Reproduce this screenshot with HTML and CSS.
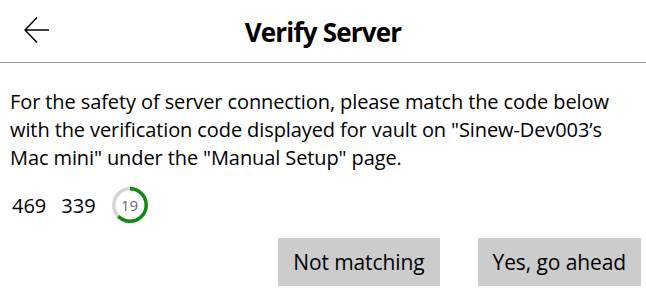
FILE: index.html
```html
<!DOCTYPE html>
<html>
<head>
<meta charset="utf-8">
<link rel="stylesheet" href="styles.css">
</head>
<body>
<div class="page">
  <header class="header">
    <button class="back" aria-label="Back">
      <svg width="26" height="28" viewBox="0 0 26 28">
        <path d="M1 14 H25 M13 1.5 L1 14 L13 26.5" fill="none" stroke="#000" stroke-width="1.6"/>
      </svg>
    </button>
    <h1 class="title">Verify Server</h1>
  </header>
  <main class="content">
    <p class="message">For the safety of server connection, please match the code below with the verification code displayed for vault on "Sinew-Dev003’s Mac mini" under the "Manual Setup" page.</p>
    <div class="code-row">
      <span class="code">469</span>
      <span class="code">339</span>
      <div class="timer">
        <svg width="36" height="36" viewBox="0 0 36 36">
          <circle cx="18" cy="18" r="16.2" fill="none" stroke="#d4d4d4" stroke-width="3.4"/>
          <circle cx="18" cy="18" r="16.2" fill="none" stroke="#108a10" stroke-width="3.4"
            stroke-dasharray="63.5 102" transform="rotate(-90 18 18)"/>
        </svg>
        <span class="timer-num">19</span>
      </div>
    </div>
    <div class="actions">
      <button class="btn">Not matching</button>
      <button class="btn">Yes, go ahead</button>
    </div>
  </main>
</div>
</body>
</html>
```

FILE: styles.css
```css
html, body {
  margin: 0;
  padding: 0;
  background: #fff;
}
body {
  font-family: "Open Sans", "Noto Sans", sans-serif;
  color: #000;
  width: 646px;
  height: 295px;
  overflow: hidden;
}
.header {
  position: relative;
  height: 62px;
  border-bottom: 1px solid #a0a0a0;
  display: flex;
  align-items: center;
  justify-content: center;
}
.back {
  position: absolute;
  left: 24px;
  top: 16px;
  border: 0;
  background: none;
  padding: 0;
  width: 26px;
  height: 28px;
  display: block;
}
.back svg { display: block; }
.title {
  margin: 0;
  padding-top: 2px;
  font-size: 26px;
  font-weight: 700;
  letter-spacing: -0.8px;
}
.content {
  padding: 25px 5px 0 10px;
}
.message {
  margin: 0;
  width: 620px;
  font-size: 20px;
  line-height: 28px;
  letter-spacing: -0.1px;
}
.code-row {
  display: flex;
  align-items: center;
  gap: 15px;
  margin-top: 15px;
  height: 36px;
  padding-left: 2px;
}
.code {
  font-size: 20px;
}
.timer {
  position: relative;
  width: 36px;
  height: 36px;
  margin-left: 1px;
}
.timer svg { display: block; }
.timer-num {
  position: absolute;
  inset: 0;
  display: flex;
  align-items: center;
  justify-content: center;
  font-size: 15px;
  color: #666;
}
.actions {
  display: flex;
  justify-content: flex-end;
  gap: 38px;
  margin-top: 15px;
}
.btn {
  font-family: "Open Sans", "Noto Sans", sans-serif;
  font-size: 21px;
  letter-spacing: -0.1px;
  background: #cccccc;
  border: 0;
  height: 48px;
  padding: 0 15px;
  color: #000;
}
```
